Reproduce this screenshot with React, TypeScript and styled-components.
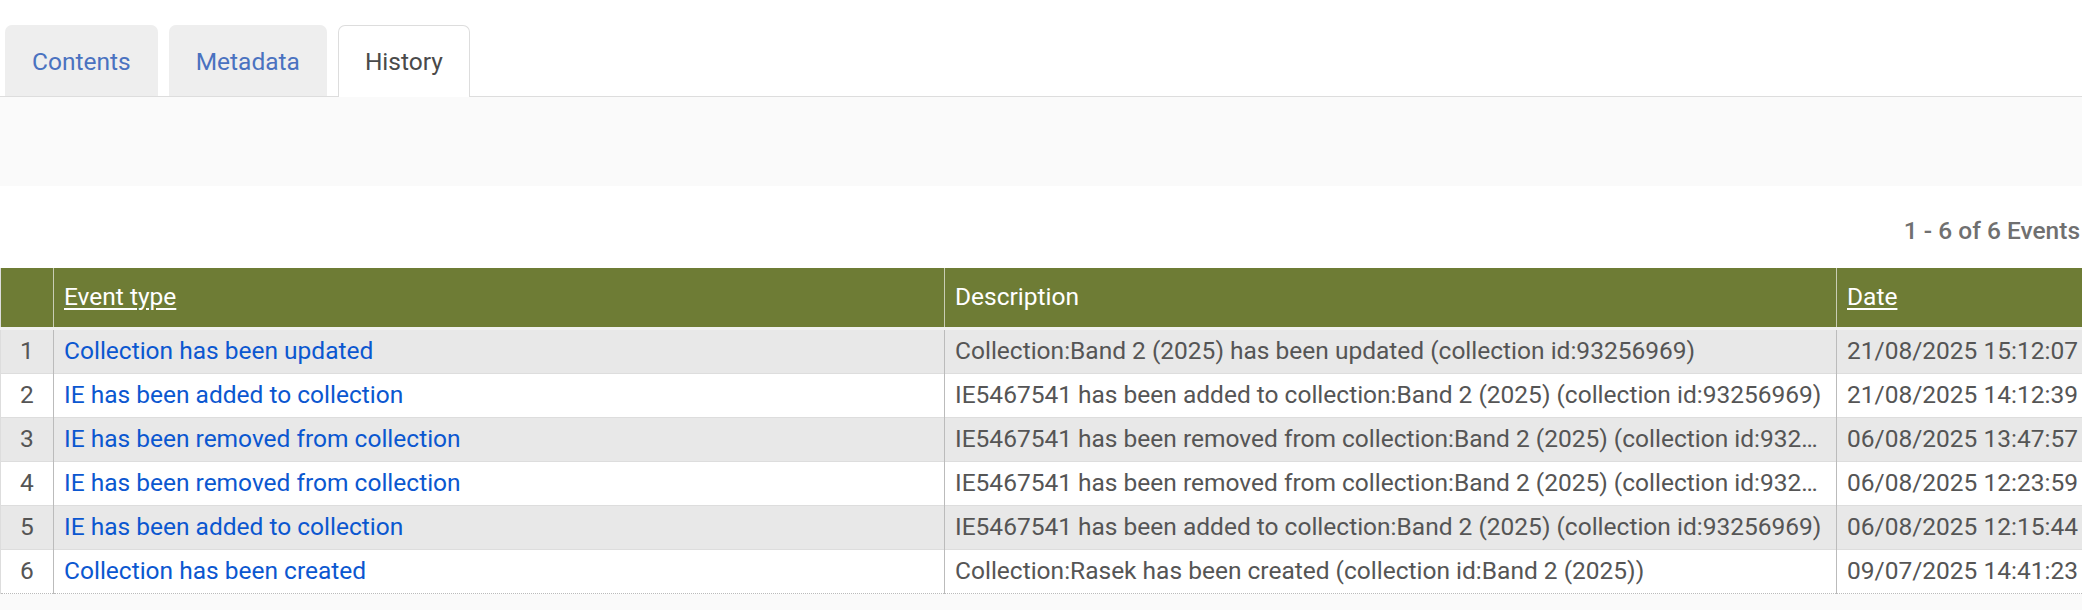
import React from 'react';
import styled, { createGlobalStyle } from 'styled-components';

const GlobalStyle = createGlobalStyle`
  html, body {
    margin: 0;
    padding: 0;
    background: #ffffff;
    font-family: Roboto, "Liberation Sans", Arial, sans-serif;
  }
`;

type EventRow = {
  type: string;
  description: string;
  date: string;
};

const events: EventRow[] = [
  {
    type: 'Collection has been updated',
    description: 'Collection:Band 2 (2025) has been updated (collection id:93256969)',
    date: '21/08/2025 15:12:07',
  },
  {
    type: 'IE has been added to collection',
    description: 'IE5467541 has been added to collection:Band 2 (2025) (collection id:93256969)',
    date: '21/08/2025 14:12:39',
  },
  {
    type: 'IE has been removed from collection',
    description: 'IE5467541 has been removed from collection:Band 2 (2025) (collection id:93256969)',
    date: '06/08/2025 13:47:57',
  },
  {
    type: 'IE has been removed from collection',
    description: 'IE5467541 has been removed from collection:Band 2 (2025) (collection id:93256969)',
    date: '06/08/2025 12:23:59',
  },
  {
    type: 'IE has been added to collection',
    description: 'IE5467541 has been added to collection:Band 2 (2025) (collection id:93256969)',
    date: '06/08/2025 12:15:44',
  },
  {
    type: 'Collection has been created',
    description: 'Collection:Rasek has been created (collection id:Band 2 (2025))',
    date: '09/07/2025 14:41:23',
  },
];

const tabs = ['Contents', 'Metadata', 'History'];

const App = () => {
  return (
    <Page>
      <GlobalStyle />
      <TabBar>
        {tabs.map((t) => (
          <Tab key={t} $active={t === 'History'}>
            {t}
          </Tab>
        ))}
      </TabBar>
      <Panel />

      <Pager>1 - 6 of 6 Events</Pager>

      <Table>
        <colgroup>
          <col style={{ width: 53 }} />
          <col style={{ width: 891 }} />
          <col style={{ width: 892 }} />
          <col />
        </colgroup>
        <thead>
          <tr>
            <Th />
            <Th>
              <SortLink>Event type</SortLink>
            </Th>
            <Th>Description</Th>
            <Th>
              <SortLink>Date</SortLink>
            </Th>
          </tr>
        </thead>
        <tbody>
          {events.map((e, i) => (
            <Row key={i} $odd={i % 2 === 0}>
              <NumCell>{i + 1}</NumCell>
              <Td>
                <EventLink>{e.type}</EventLink>
              </Td>
              <Td $wide>{e.description}</Td>
              <Td>{e.date}</Td>
            </Row>
          ))}
        </tbody>
      </Table>
      <Footer />
    </Page>
  );
};

const Page = styled.div`
  width: 100%;
  min-height: 610px;
  background: #fafafa;
`;

const TabBar = styled.div`
  display: flex;
  gap: 11px;
  padding: 25px 0 0 5px;
  background: #ffffff;
  border-bottom: 1px solid #dddddd;
  height: 71px;
`;

const Tab = styled.div<{ $active?: boolean }>`
  display: flex;
  align-items: center;
  justify-content: center;
  padding: 0 26px;
  box-sizing: border-box;
  border-radius: 7px 7px 0 0;
  font-size: 24.5px;
  color: ${(p) => (p.$active ? '#4a4a4a' : '#4a72c0')};
  background: ${(p) => (p.$active ? '#ffffff' : '#eeeeee')};
  border: 1px solid ${(p) => (p.$active ? '#dddddd' : '#eeeeee')};
  border-bottom: none;
  margin-bottom: ${(p) => (p.$active ? '-1px' : '0')};
  height: ${(p) => (p.$active ? '72px' : '71px')};
  cursor: pointer;
`;

const Panel = styled.div`
  height: 89px;
  background: #fafafa;
`;

const Pager = styled.div`
  height: 82px;
  box-sizing: border-box;
  padding: 6px 2px 0 0;
  background: #ffffff;
  display: flex;
  align-items: center;
  justify-content: flex-end;
  font-size: 24.5px;
  font-weight: 500;
  color: #707070;
`;

const Table = styled.table`
  width: 100%;
  table-layout: fixed;
  border-collapse: collapse;
  font-size: 24.5px;
  color: #555555;
  border-left: 1px solid #dddddd;
  border-bottom: 1px dotted #bbbbbb;
  background: #ffffff;
`;

const Th = styled.th`
  height: 56px;
  padding: 0 4px 3px 10px;
  background: #6e7c35;
  color: #ffffff;
  font-weight: 400;
  text-align: left;
  border-left: 1px solid #c9cdb5;
  border-bottom: 3px solid #f0f0f0;
  &:first-child {
    border-left: none;
  }
`;

const SortLink = styled.span`
  text-decoration: underline;
  text-underline-offset: 3px;
  cursor: pointer;
`;

const Row = styled.tr<{ $odd: boolean }>`
  background: ${(p) => (p.$odd ? '#e8e8e8' : '#ffffff')};
  border-bottom: 1px solid #dddddd;
  &:last-child {
    border-bottom: none;
  }
`;

const Td = styled.td<{ $wide?: boolean }>`
  height: 40px;
  padding: 0 ${(p) => (p.$wide ? '14px' : '4px')} 3px 10px;
  white-space: nowrap;
  overflow: hidden;
  text-overflow: ellipsis;
  border-left: 1px solid #bbbbbb;
`;

const NumCell = styled(Td)`
  text-align: center;
  padding: 0 0 3px;
  border-left: none;
`;

const EventLink = styled.a`
  color: #0b57d0;
  text-decoration: none;
  cursor: pointer;
`;

const Footer = styled.div`
  height: 17px;
  background: #fafafa;
`;

export default App;
